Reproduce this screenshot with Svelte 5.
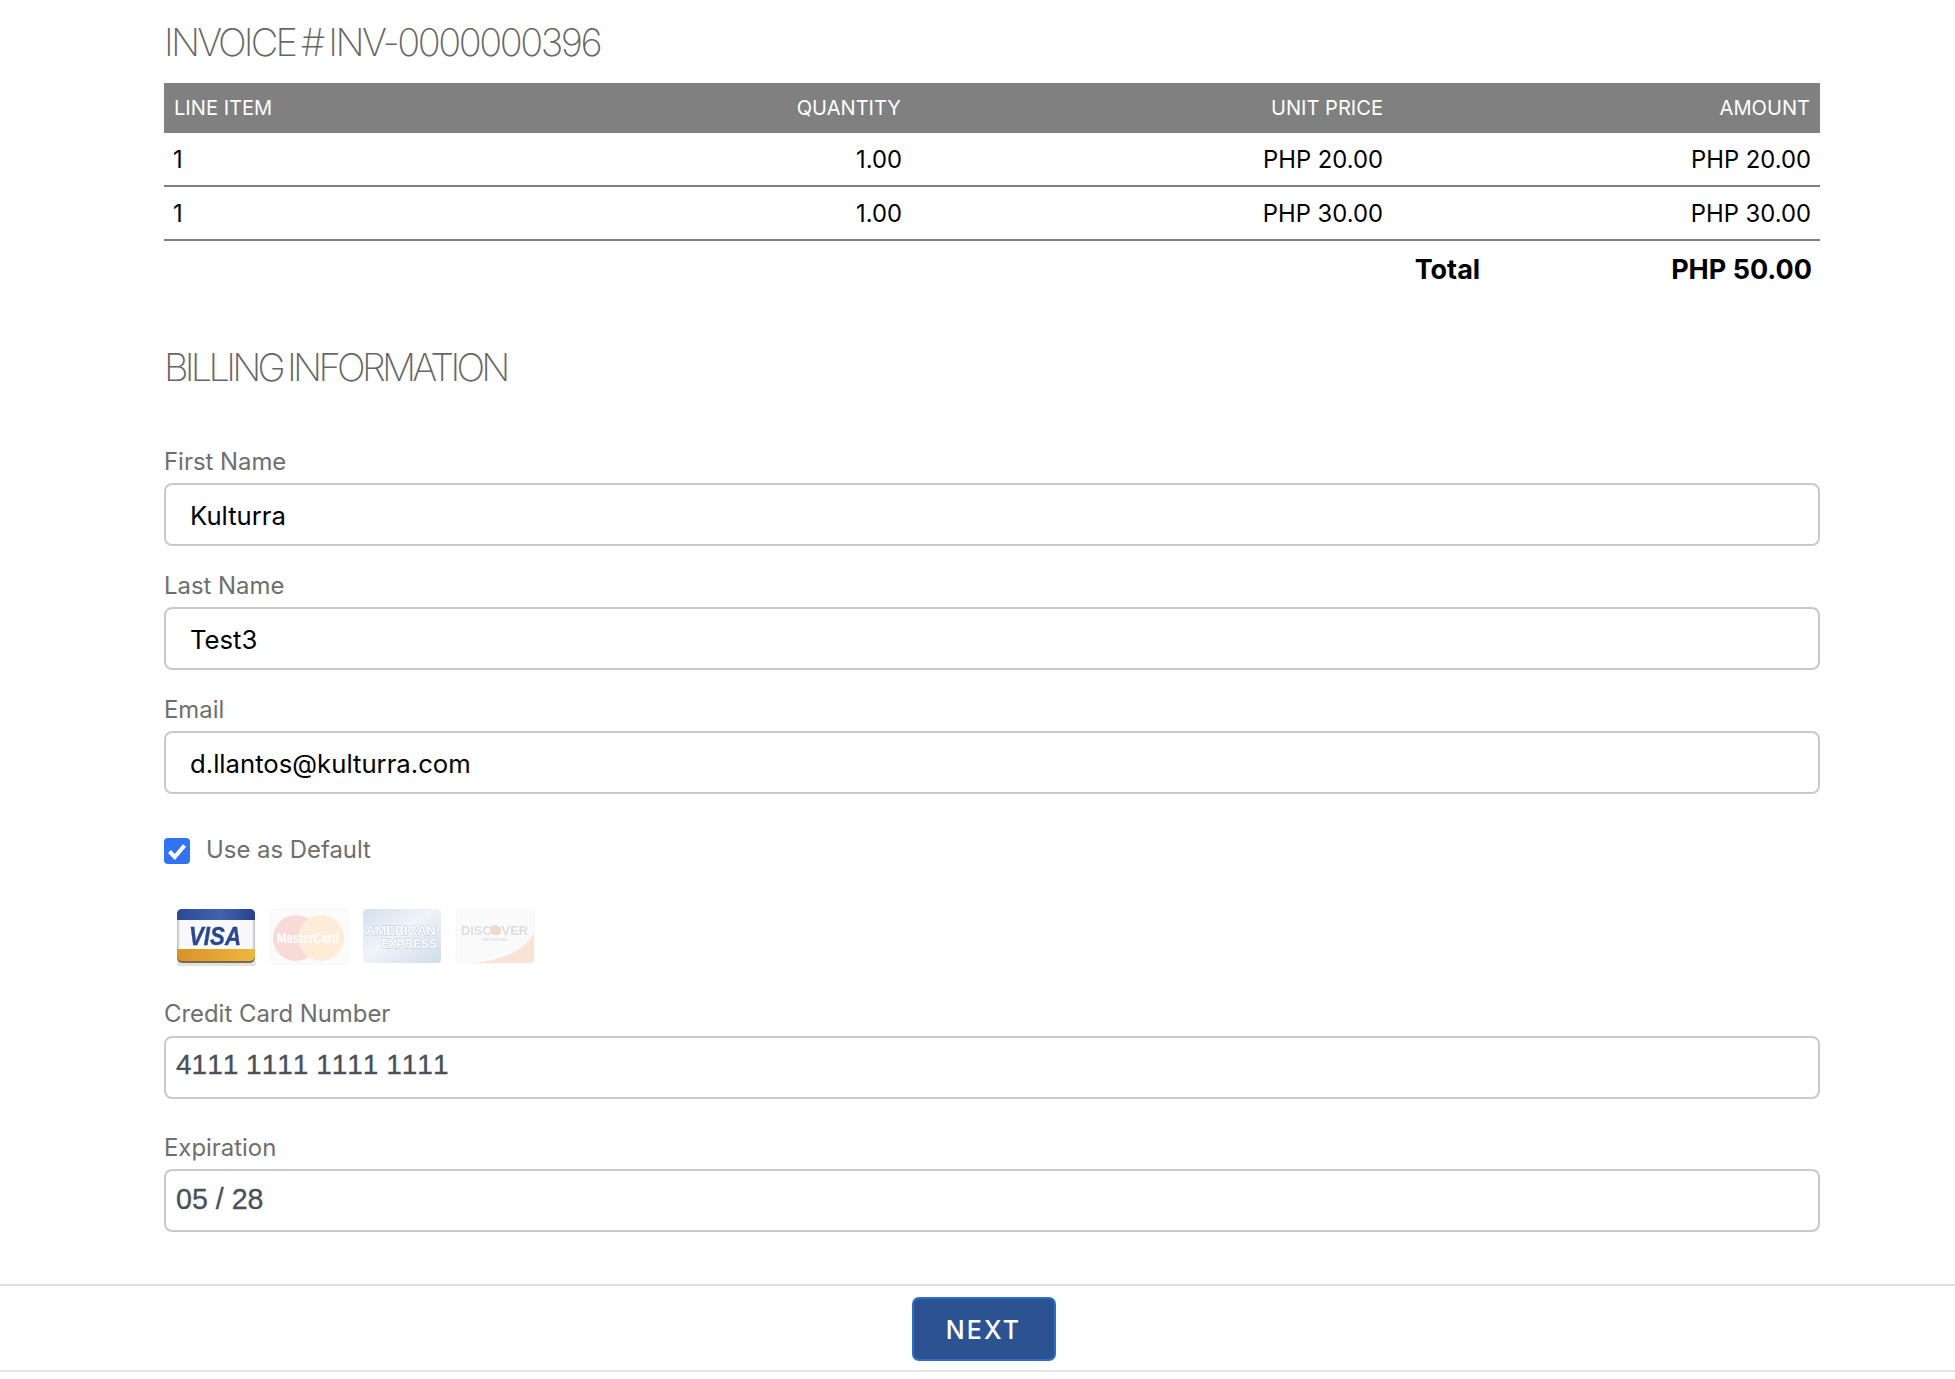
<script>
  const rows = [
    { item: '1', qty: '1.00', price: 'PHP 20.00', amount: 'PHP 20.00' },
    { item: '1', qty: '1.00', price: 'PHP 30.00', amount: 'PHP 30.00' }
  ];
</script>

<main class="page">
  <section class="content">
    <h2 class="title invoice">INVOICE # <span class="num">INV-0000000396</span></h2>
    <table class="items">
      <colgroup>
        <col class="c1" /><col class="c2" /><col class="c3" /><col class="c4" />
      </colgroup>
      <thead>
        <tr><th class="left">LINE ITEM</th><th>QUANTITY</th><th>UNIT PRICE</th><th>AMOUNT</th></tr>
      </thead>
      <tbody>
        {#each rows as r}
          <tr><td class="left">{r.item}</td><td>{r.qty}</td><td class="price">{r.price}</td><td>{r.amount}</td></tr>
        {/each}
      </tbody>
    </table>
    <div class="total">
      <span class="total-label">Total</span>
      <span class="total-value">PHP 50.00</span>
    </div>

    <h2 class="title billing">BILLING INFORMATION</h2>

    <div class="field first">
      <label for="fn">First Name</label>
      <input id="fn" value="Kulturra" />
    </div>
    <div class="field">
      <label for="ln">Last Name</label>
      <input id="ln" value="Test3" />
    </div>
    <div class="field">
      <label for="em">Email</label>
      <input id="em" value="d.llantos@kulturra.com" />
    </div>

    <div class="check">
      <span class="box">
        <svg viewBox="0 0 26 26" width="26" height="26"><path d="M5.5 13.5l5.3 5.5L20.5 7.5" fill="none" stroke="#fff" stroke-width="4" /></svg>
      </span>
      <span class="check-label">Use as Default</span>
    </div>

    <div class="cards">
      <svg class="card" viewBox="0 0 80 58" width="80" height="58">
        <defs>
          <linearGradient id="vb" x1="0" x2="1" y1="0" y2="0"><stop offset="0" stop-color="#2a4a97" /><stop offset=".55" stop-color="#4262ad" /><stop offset="1" stop-color="#26418c" /></linearGradient>
          <linearGradient id="vo" x1="0" x2="1" y1="0" y2="0"><stop offset="0" stop-color="#d8922c" /><stop offset="1" stop-color="#ecb83c" /></linearGradient>
          <linearGradient id="vw" x1="0" x2="1" y1="0" y2="0"><stop offset="0" stop-color="#b9b9bd" /><stop offset=".04" stop-color="#f9f9fb" /><stop offset=".96" stop-color="#f9f9fb" /><stop offset="1" stop-color="#b9b9bd" /></linearGradient>
        </defs>
        <rect x="1" y="53" width="79" height="5" rx="2" fill="#e2e2e2" />
        <rect x="1" y="1" width="78" height="54" rx="5" fill="#7c6a4c" />
        <path d="M1 12V6a5 5 0 0 1 5-5h68a5 5 0 0 1 5 5v6z" fill="url(#vb)" />
        <rect x="1" y="12" width="78" height="29" fill="url(#vw)" />
        <path d="M1 41h78v7a5 5 0 0 1-5 5H6a5 5 0 0 1-5-5z" fill="url(#vo)" />
        <text x="13" y="37" textLength="52" lengthAdjust="spacingAndGlyphs" class="visa">VISA</text>
      </svg>
      <svg class="card faded" viewBox="0 0 80 58" width="80" height="58">
        <rect x="1" y="1" width="78" height="55" rx="3" fill="#fbfbfb" stroke="#f4f4f4" />
        <circle cx="27" cy="30" r="23" fill="#f7d2cd" />
        <circle cx="52" cy="30" r="23" fill="#fce8cf" />
        <text x="8" y="35" textLength="62" lengthAdjust="spacingAndGlyphs" class="mc">MasterCard</text>
      </svg>
      <svg class="card faded" viewBox="0 0 80 58" width="80" height="58">
        <defs>
          <linearGradient id="ax" x1="0" x2="1" y1="0" y2="1"><stop offset="0" stop-color="#c9d8ea" /><stop offset=".45" stop-color="#edf2f8" /><stop offset="1" stop-color="#c5d5e8" /></linearGradient>
        </defs>
        <rect x="1" y="1" width="78" height="54" rx="4" fill="url(#ax)" />
        <text x="4" y="27" textLength="70" lengthAdjust="spacingAndGlyphs" class="ax">AMERICAN</text>
        <text x="19" y="40" textLength="56" lengthAdjust="spacingAndGlyphs" class="ax">EXPRESS</text>
      </svg>
      <svg class="card faded" viewBox="0 0 80 58" width="80" height="58">
        <rect x="1" y="1" width="78" height="54" rx="3" fill="#fafafa" stroke="#f4f4f4" />
        <path d="M18 55c28-2 50-12 61-29v25a4 4 0 0 1-4 4z" fill="#f8dccd" />
        <circle cx="40" cy="22" r="5" fill="#f7cfb4" />
        <text x="6" y="27" textLength="67" lengthAdjust="spacingAndGlyphs" class="dc">DISCOVER</text>
        <text x="27" y="33" textLength="26" lengthAdjust="spacingAndGlyphs" class="dn">NETWORK</text>
      </svg>
    </div>

    <div class="field cc">
      <label for="cc">Credit Card Number</label>
      <input id="cc" class="card-input" value="4111 1111 1111 1111" />
    </div>
    <div class="field exp">
      <label for="ex">Expiration</label>
      <input id="ex" class="card-input" value="05 / 28" />
    </div>
  </section>

  <footer class="bar">
    <button type="button" class="next">NEXT</button>
  </footer>
</main>

<style>
  :global(body) {
    margin: 0;
    background: #fff;
    font-family: Inter, "Liberation Sans", sans-serif;
  }
  .page {
    width: 1955px;
    height: 1379px;
    overflow: hidden;
    background: #fff;
    box-sizing: border-box;
  }
  .content {
    margin: 0 135px 0 164px;
    height: 1284px;
    box-sizing: border-box;
    padding-top: 18px;
  }
  .title {
    margin: 0;
    font-family: Inter, sans-serif;
    font-weight: 200;
    font-size: 38px;
    line-height: 48px;
    color: #666;
  }
  .invoice {
    height: 65px;
    letter-spacing: -2.8px;
    word-spacing: -2px;
  }
  .num {
    letter-spacing: -2.45px;
  }
  .billing {
    margin-top: 46px;
    letter-spacing: -3.7px;
    word-spacing: -2px;
  }
  .items {
    width: 100%;
    border-collapse: collapse;
    table-layout: fixed;
  }
  .c1 { width: 600px; }
  .c2 { width: 147px; }
  .c3 { width: 482px; }
  .items th {
    height: 50px;
    padding: 0 10px;
    background: #808080;
    color: #fff;
    font-weight: 400;
    font-size: 20.1px;
    text-align: right;
  }
  .items td {
    height: 52px;
    padding: 0 9px;
    border-bottom: 2px solid #808080;
    font-size: 23.8px;
    color: #000;
    text-align: right;
  }
  .items td.price {
    padding-right: 10px;
  }
  .items .left {
    text-align: left;
  }
  .total {
    display: flex;
    justify-content: flex-end;
    align-items: center;
    height: 56px;
    font-weight: 700;
    font-size: 27px;
    color: #000;
    padding-right: 8px;
  }
  .total-label {
    margin-right: 191px;
  }
  .field {
    margin-top: 25px;
  }
  .field.first {
    margin-top: 56px;
  }
  .field.cc {
    margin-top: 35px;
  }
  .field.cc label {
    margin-bottom: 7px;
  }
  .field.exp {
    margin-top: 34px;
  }
  label {
    display: block;
    font-size: 23.9px;
    line-height: 30px;
    color: #6e6e6e;
    margin-bottom: 6px;
  }
  input {
    display: block;
    width: 100%;
    height: 63px;
    box-sizing: border-box;
    border: 2px solid #c9c9c9;
    border-radius: 8px;
    padding: 2px 24px 0;
    font-family: Inter, sans-serif;
    font-size: 25.7px;
    color: #000;
    background: #fff;
    outline: none;
  }
  input.card-input {
    padding: 0 10px 5px;
    color: #495057;
    font-family: "Liberation Sans", sans-serif;
    font-kerning: none;
    font-size: 28px;
    -webkit-text-stroke: 0.3px #495057;
  }
  #ex.card-input {
    padding-bottom: 3px;
    font-size: 28.6px;
  }
  .check {
    display: flex;
    align-items: flex-start;
    gap: 16px;
    margin-top: 44px;
  }
  .box {
    width: 26px;
    height: 26px;
    border-radius: 4px;
    background: #3273f6;
    display: block;
  }
  .box svg {
    display: block;
  }
  .check-label {
    font-size: 23.9px;
    color: #6e6e6e;
    line-height: 24px;
  }
  .cards {
    display: flex;
    gap: 13px;
    margin-top: 44px;
    padding-left: 12px;
    height: 56px;
  }
  .card {
    display: block;
    overflow: visible;
    filter: blur(0.6px);
  }
  .faded {
    opacity: 0.8;
  }
  .visa {
    font: italic 700 26px "Liberation Sans", sans-serif;
    fill: #2a468f;
    stroke: #2a468f;
    stroke-width: 0.4px;
  }
  .mc {
    font: 700 15px "Liberation Sans", sans-serif;
    fill: #fff;
  }
  .ax {
    font: 700 13px "Liberation Sans", sans-serif;
    fill: #fff;
    stroke: #9db8d8;
    stroke-width: 0.8px;
    paint-order: stroke;
  }
  .dc {
    font: 700 13px "Liberation Sans", sans-serif;
    fill: #d6d6d6;
  }
  .dn {
    font: 700 4px "Liberation Sans", sans-serif;
    fill: #d6d6d6;
  }
  .bar {
    height: 88px;
    box-sizing: border-box;
    border-top: 2px solid #ddd;
    border-bottom: 2px solid #e6e6e6;
    display: flex;
    justify-content: center;
    align-items: flex-start;
    padding: 11px 0 0 12px;
  }
  .next {
    width: 144px;
    height: 64px;
    box-sizing: border-box;
    padding: 2px 0 0;
    background: #2c5391;
    border: 2px solid #2e6ec5;
    border-radius: 7px;
    color: #fff;
    font-family: Inter, sans-serif;
    font-size: 25px;
    font-weight: 500;
    letter-spacing: 2.2px;
  }
</style>
